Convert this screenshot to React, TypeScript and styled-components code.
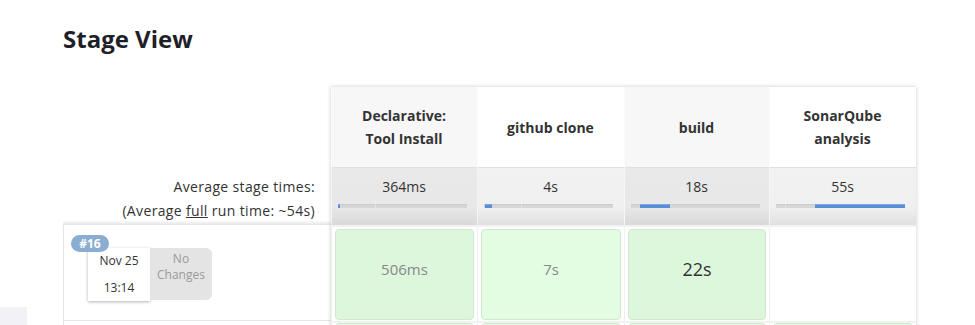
import { FC } from "react";
import styled, { createGlobalStyle } from "styled-components";

const GlobalStyle = createGlobalStyle`
	html, body {
		margin: 0;
		padding: 0;
		background: #fff;
		overflow: hidden;
	}
	body {
		font-family: "Open Sans", "Noto Sans", "Noto Sans CJK KR", sans-serif;
		color: #333;
	}
`

interface IStage {
	title: string[];
	avg: string;
	barFrom: number;
	barTo: number;
	tick?: number;
	shaded: boolean;
}

interface IRunCell {
	label?: string;
	size: number;
	faded: boolean;
	tone: "base" | "light" | "none";
}

const stages: IStage[] = [
	{ title: ["Declarative:", "Tool Install"], avg: "364ms", barFrom: 0, barTo: 1.2, tick: 29, shaded: true },
	{ title: ["github clone"], avg: "4s", barFrom: 0.7, barTo: 6.5, tick: 29, shaded: false },
	{ title: ["build"], avg: "18s", barFrom: 7, barTo: 30, shaded: true },
	{ title: ["SonarQube", "analysis"], avg: "55s", barFrom: 30, barTo: 100, tick: 7, shaded: false },
]

const run: IRunCell[] = [
	{ label: "506ms", size: 15, faded: true, tone: "base" },
	{ label: "7s", size: 15, faded: true, tone: "light" },
	{ label: "22s", size: 18, faded: false, tone: "base" },
	{ size: 15, faded: false, tone: "none" },
]

const COLS = "146px 147px 145px 147px"

const StageBar: FC<{ from: number; to: number; tick?: number }> = ({ from, to, tick }) => (
	<SBar>
		{tick !== undefined && <SBarTick style={{ left: `${tick}%` }} />}
		<SBarFill style={{ left: `${from}%`, width: `${to - from}%` }} />
	</SBar>
)

export default function App() {
	return (
		<SPage>
			<GlobalStyle />
			<SSidebar>
				<SSideTab />
			</SSidebar>
			<SMain>
				<STitle>Stage View</STitle>
				<SView>
					<SLabels>
						<SLabelHead />
						<SAverageLabel>
							<div>Average stage times:</div>
							<div>(Average <u>full</u> run time: ~54s)</div>
						</SAverageLabel>
						<SRunLabel>
							<SRunBox>
								<SBadge>#16</SBadge>
								<SDateBox>
									<span>Nov 25</span>
									<span>13:14</span>
								</SDateBox>
								<SChangesBox>No<br />Changes</SChangesBox>
							</SRunBox>
						</SRunLabel>
						<SRunLabel />
					</SLabels>
					<STable>
						<SHeaderRow>
							{stages.map((stage) => (
								<SHeaderCell key={stage.avg} shaded={stage.shaded}>
									{stage.title.map((line) => <div key={line}>{line}</div>)}
								</SHeaderCell>
							))}
						</SHeaderRow>
						<SAverageRow>
							{stages.map((stage) => (
								<SAverageCell key={stage.avg} shaded={stage.shaded}>
									<span>{stage.avg}</span>
									<StageBar from={stage.barFrom} to={stage.barTo} tick={stage.tick} />
								</SAverageCell>
							))}
						</SAverageRow>
						<SRunRow>
							{run.map((cell, idx) => (
								<SRunCell key={'run-' + idx}>
									{cell.tone !== "none" && (
										<SStageBox tone={cell.tone} faded={cell.faded} size={cell.size}>
											{cell.label}
										</SStageBox>
									)}
								</SRunCell>
							))}
						</SRunRow>
						<SRunRow>
							{run.map((_, idx) => (
								<SRunCell key={'next-' + idx} flush={true}>
									<SStageBox tone="light" faded={true} size={15} />
								</SRunCell>
							))}
						</SRunRow>
					</STable>
				</SView>
			</SMain>
		</SPage>
	)
}

const SPage = styled.div`
	display: flex;
	width: 975px;
	height: 325px;
	overflow: hidden;
`

const SSidebar = styled.div`
	width: 27px;
	flex-shrink: 0;
	padding-top: 307px;
`

const SSideTab = styled.div`
	height: 40px;
	background: #f2f2f6;
`

const SMain = styled.div`
	padding-left: 36px;
	flex: 1;
`

const STitle = styled.h2`
	margin: 0;
	padding-top: 23px;
	height: 87px;
	box-sizing: border-box;
	font-size: 24px;
	line-height: 32px;
	font-weight: 700;
	color: #1f1f2a;
`

const SView = styled.div`
	display: flex;
	align-items: flex-start;
`

const SLabels = styled.div`
	width: 268px;
	display: flex;
	flex-direction: column;
`

const SLabelHead = styled.div`
	height: 80px;
`

const SAverageLabel = styled.div`
	height: 58px;
	box-sizing: border-box;
	padding: 8px 16px 0 0;
	text-align: right;
	font-size: 14px;
	line-height: 24px;
	letter-spacing: 0.35px;
	color: #333;
	background: linear-gradient(to bottom, #fff 92%, #e4e4e4 100%);
`

const SRunLabel = styled.div`
	height: 96px;
	box-sizing: border-box;
	border-left: 1px solid #e6e6e6;
	border-bottom: 1px solid #e6e6e6;
	padding: 23px 0 0 24px;
`

const SRunBox = styled.div`
	position: relative;
	display: flex;
	width: max-content;
	font-size: 12px;
`

const SBadge = styled.span`
	position: absolute;
	left: -17px;
	top: -13px;
	width: 38px;
	height: 17px;
	border-radius: 9px;
	background: #8aadd2;
	color: #fff;
	font-weight: 700;
	font-size: 12px;
	line-height: 17px;
	text-align: center;
	z-index: 1;
`

const SDateBox = styled.div`
	width: 62px;
	height: 53px;
	box-sizing: border-box;
	padding-top: 4px;
	display: flex;
	flex-direction: column;
	align-items: center;
	gap: 9px;
	line-height: 18px;
	background: #fff;
	color: #333;
	box-shadow: 0 1px 3px rgba(0, 0, 0, 0.3);
`

const SChangesBox = styled.div`
	width: 62px;
	height: 52px;
	box-sizing: border-box;
	padding-top: 3px;
	text-align: center;
	line-height: 16px;
	color: #9a9a9a;
	background: #e4e4e4;
	border-radius: 0 6px 6px 0;
`

const STable = styled.div`
	display: flex;
	flex-direction: column;
	width: 585px;
	box-shadow: 0 0 4px rgba(0, 0, 0, 0.22);
	background: #fff;
`

const SHeaderRow = styled.div`
	display: grid;
	grid-template-columns: ${COLS};
	height: 80px;
`

const SHeaderCell = styled.div<{ shaded: boolean }>`
	display: flex;
	flex-direction: column;
	align-items: center;
	justify-content: center;
	font-size: 14px;
	font-weight: 700;
	line-height: 23px;
	color: #333;
	background: ${({ shaded }) => shaded ? '#f7f7f7' : '#fff'};
	box-shadow: inset 1px 0 0 #fbfbfb;
`

const SAverageRow = styled.div`
	display: grid;
	grid-template-columns: ${COLS};
	height: 58px;
`

const SAverageCell = styled.div<{ shaded: boolean }>`
	display: flex;
	flex-direction: column;
	align-items: flex-start;
	padding-top: 9px;
	font-size: 14px;
	line-height: 22px;
	color: #333;
	background: ${({ shaded }) => shaded
		? 'linear-gradient(to bottom, #e9e9e9 0%, #e8e8e8 70%, #d9d9d9 100%)'
		: 'linear-gradient(to bottom, #f2f2f2 0%, #f0f0f0 70%, #e0e0e0 100%)'};
	box-shadow: inset 1px 0 0 #f6f6f6, inset 0 1px 0 #e0e0e0;

	& > span {
		align-self: center;
	}
`

const SBar = styled.div`
	position: relative;
	margin: 6px 0 0 7px;
	width: 129px;
	height: 4px;
	background: #d6d6d6;
	box-shadow: inset 0 1px 0 #cacaca;
`

const SBarTick = styled.div`
	position: absolute;
	top: 0;
	width: 1px;
	height: 4px;
	background: #e2e2e2;
`

const SBarFill = styled.div`
	position: absolute;
	top: 0;
	height: 4px;
	background: #5a8ed6;
	box-shadow: inset 0 1px 0 #7ba6e2;
`

const SRunRow = styled.div`
	display: grid;
	grid-template-columns: ${COLS};
	height: 96px;
	box-sizing: border-box;
	border-top: 2px solid #f2f2f2;
`

const SRunCell = styled.div<{ flush?: boolean }>`
	padding: ${({ flush }) => flush ? '0 3px 2px 4px' : '2px 3px 2px 4px'};
	box-shadow: inset 1px 0 0 #f0f0f0;
`

const SStageBox = styled.div<{ tone: "base" | "light"; faded: boolean; size: number }>`
	height: 91px;
	box-sizing: border-box;
	padding-top: 26px;
	text-align: center;
	border-radius: 4px;
	border: 1px solid #d2e6d2;
	background: ${({ tone }) => tone === 'light' ? '#e2fde2' : '#ddf7dd'};
	color: ${({ faded }) => faded ? '#888' : '#333'};
	font-size: ${({ size }) => size}px;
	line-height: 26px;
`
